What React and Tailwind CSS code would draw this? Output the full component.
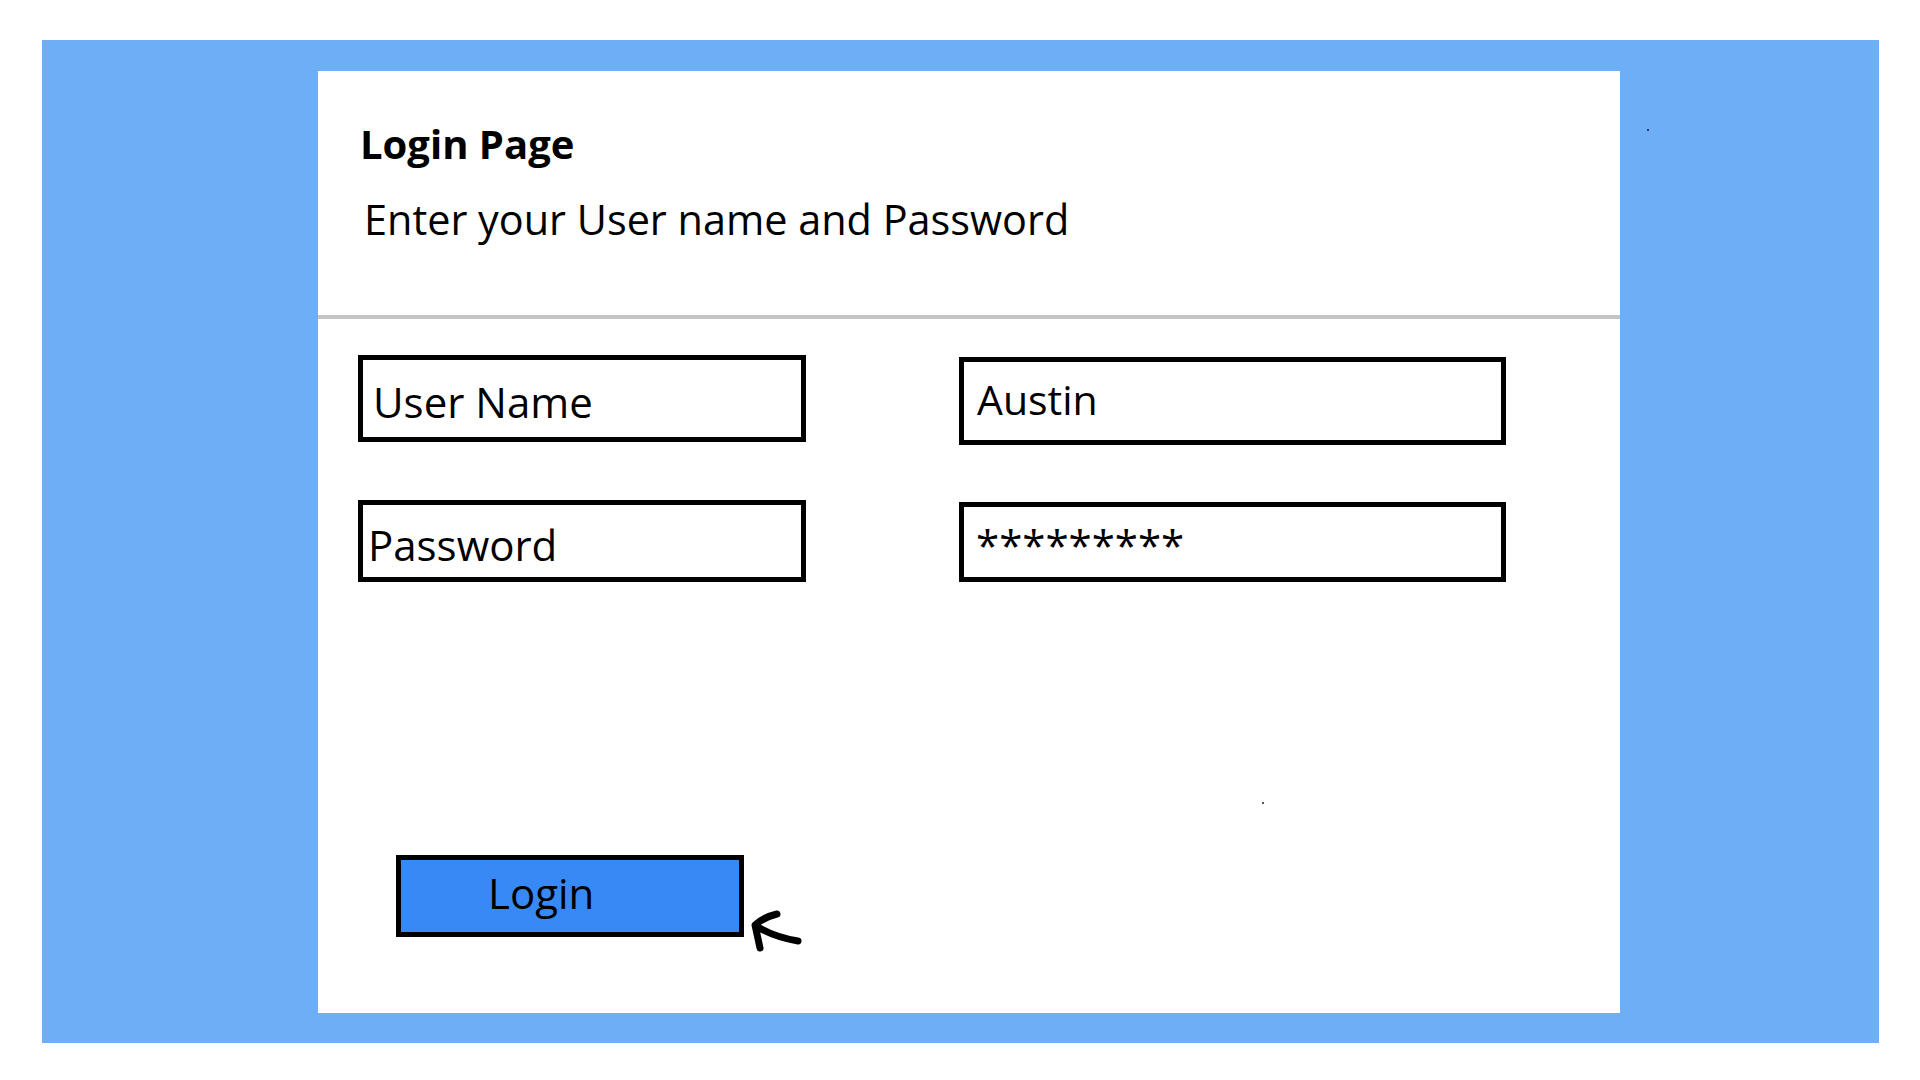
import React from "react";

const font = { fontFamily: '"Open Sans", "Noto Sans", sans-serif' };

export default function App() {
  return (
    <div className="w-[1920px] h-[1080px] bg-white pt-[40px] pl-[42px] overflow-hidden" style={font}>
      <div className="relative w-[1837px] h-[1003px] bg-[#6eaef7] pt-[31px] pl-[276px]">
        <div className="absolute left-[1605px] top-[89px] w-[2px] h-[2px] bg-[#1e3a6a]" />
        <div className="relative w-[1302px] h-[942px] bg-white flex flex-col text-black">
          <div className="h-[244px] pt-[53px] shrink-0">
            <div className="ml-[42px] text-[40px] leading-none font-bold">Login Page</div>
            <div className="ml-[46px] mt-[35px] text-[41.4px] leading-none">Enter your User name and Password</div>
          </div>
          <div className="h-[4px] bg-[#c4c4c4] shrink-0" />
          <div className="pt-[36px] pl-[40px] flex flex-col">
            <div className="flex items-start">
              <div className="w-[448px] h-[87px] border-[5px] border-black pt-[21px] pl-[10px] text-[42px] leading-none">
                User Name
              </div>
              <div className="ml-[153px] mt-[2px] w-[547px] h-[88px] border-[5px] border-black pt-[17px] pl-[13px] text-[41px] leading-none">
                Austin
              </div>
            </div>
            <div className="flex items-start mt-[55px]">
              <div className="w-[448px] h-[82px] border-[5px] border-black pt-[19px] pl-[5px] text-[42px] leading-none">
                Password
              </div>
              <div className="ml-[153px] mt-[2px] w-[547px] h-[80px] border-[5px] border-black pt-[17px] pl-[12px] text-[42px] leading-none">
                *********
              </div>
            </div>
            <div className="relative mt-[273px] ml-[38px] w-[348px]">
              <div className="w-[348px] h-[82px] border-[5px] border-black bg-[#378af5] pt-[12px] pl-[87px] text-[42px] leading-none">
                Login
              </div>
              <svg
                className="absolute left-[348px] top-[52px]"
                width="62"
                height="52"
                viewBox="0 0 62 52"
                fill="none"
              >
                <path
                  d="M 33 7 Q 20 10 11 18 L 16 41 M 12 19 Q 30 30 54 34"
                  stroke="black"
                  strokeWidth="7"
                  strokeLinecap="round"
                  strokeLinejoin="round"
                />
              </svg>
            </div>
          </div>
          <div className="absolute left-[944px] top-[731px] w-[2px] h-[2px] bg-[#555]" />
        </div>
      </div>
    </div>
  );
}
